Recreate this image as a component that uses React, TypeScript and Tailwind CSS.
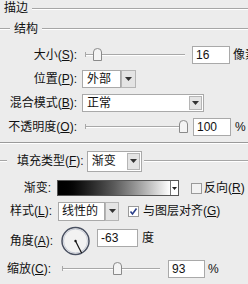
import React from 'react'

const FONT = { fontFamily: '"Liberation Sans", "Noto Sans CJK SC", sans-serif' }

function Label({ text, k, w }: { text: string; k?: string; w: number }) {
  return (
    <div className="shrink-0 text-right text-[12px] text-[#111] whitespace-nowrap" style={{ width: w }}>
      {text}
      {k && (
        <>
          (<u>{k}</u>)
        </>
      )}
      :
    </div>
  )
}

function Arrow({ w = 14, h = 18 }: { w?: number; h?: number }) {
  return (
    <div className="flex items-center justify-center bg-[#e4e4e4] border border-[#b5b5b5] shrink-0" style={{ width: w, height: h }}>
      <svg width="7" height="4" viewBox="0 0 7 4">
        <polygon points="0,0 7,0 3.5,4" fill="#333" />
      </svg>
    </div>
  )
}

function Slider({ w, pos }: { w: number; pos: number }) {
  return (
    <div className="relative h-[14px] shrink-0" style={{ width: w }}>
      <div className="absolute left-0 right-0 top-[6px] h-px bg-[#a8a8a8]" />
      <div className="absolute left-0 right-0 top-[7px] h-px bg-white" />
      <div className="absolute left-0 top-[4px] w-px h-[5px] bg-[#a8a8a8]" />
      <svg className="absolute top-0" style={{ left: pos - 4 }} width="9" height="13" viewBox="0 0 9 13">
        <path d="M0.5 12.5 V4 Q0.5 0.5 4.5 0.5 Q8.5 0.5 8.5 4 V12.5 Z" fill="#f4f4f4" stroke="#8a8a8a" />
      </svg>
    </div>
  )
}

function Input({ v, w }: { v: string; w: number }) {
  return (
    <div className="h-[18px] bg-white border border-[#a9a9a9] pl-[3px] flex items-center text-[12px] text-[#111] shrink-0" style={{ width: w }}>
      {v}
    </div>
  )
}

function Check({ on }: { on?: boolean }) {
  return (
    <svg width="11" height="11" viewBox="0 0 11 11" className="shrink-0">
      <rect x="0.5" y="0.5" width="10" height="10" fill={on ? '#fff' : '#f2f2f2'} stroke="#9a9a9a" />
      {on && <path d="M2.5 5.5 L4.5 8 L8.5 2.5" fill="none" stroke="#2a3f8a" strokeWidth="1.6" />}
    </svg>
  )
}

export default function App() {
  return (
    <div className="w-[248px] h-[284px] bg-[#ececec] overflow-hidden relative text-[12px] text-[#111]" style={FONT}>
      {/* 描边 */}
      <div className="h-[18px] flex items-center gap-[4px] pl-[4px]">
        <span className="-mt-[2px]">描边</span>
        <div className="flex-1 border-t border-[#a6a6a6] border-b-white border-b" />
      </div>

      {/* 结构 */}
      <div className="h-[22px] flex items-center">
        <div className="w-[10px] border-t border-b border-t-[#a6a6a6] border-b-white" />
        <span className="px-[4px]">结构</span>
        <div className="flex-1 border-t border-b border-t-[#a6a6a6] border-b-white" />
      </div>

      <div className="mt-[3px]">
        <div className="h-[24px] flex items-center">
          <Label text="大小" k="S" w={77} />
          <div className="ml-[8px]"><Slider w={100} pos={12} /></div>
          <div className="ml-[7px]"><Input v="16" w={38} /></div>
          <span className="ml-[3px] whitespace-nowrap">像素</span>
        </div>
        <div className="h-[24px] flex items-center">
          <Label text="位置" k="P" w={77} />
          <div className="ml-[5px] flex h-[18px]">
            <div className="w-[39px] h-[18px] bg-white border border-[#a9a9a9] pl-[4px] flex items-center">外部</div>
            <Arrow w={15} />
          </div>
        </div>
        <div className="h-[24px] flex items-center">
          <Label text="混合模式" k="B" w={77} />
          <div className="ml-[5px] flex h-[18px] w-[122px] bg-white border border-[#a9a9a9]">
            <div className="flex-1 pl-[4px] flex items-center">正常</div>
            <div className="flex items-center pr-[1px]"><Arrow w={13} h={14} /></div>
          </div>
        </div>
        <div className="h-[24px] flex items-center">
          <Label text="不透明度" k="O" w={77} />
          <div className="ml-[8px]"><Slider w={100} pos={98} /></div>
          <div className="ml-[8px]"><Input v="100" w={38} /></div>
          <span className="ml-[4px]">%</span>
        </div>
      </div>

      <div className="mt-[3px] border-t border-b border-t-[#9a9a9a] border-b-white" />

      {/* 填充类型 */}
      <div className="mt-[6px] h-[22px] flex items-center">
        <div className="w-[7px] border-t border-b border-t-[#a6a6a6] border-b-white" />
        <div className="ml-[10px] whitespace-nowrap">填充类型(<u>F</u>):</div>
        <div className="ml-[3px] w-[55px] h-[21px] bg-white border border-[#a9a9a9] flex items-center">
          <div className="flex-1 pl-[4px]">渐变</div>
          <div className="pr-[1px]"><Arrow w={13} h={17} /></div>
        </div>
        <div className="ml-[2px] flex-1 border-t border-b border-t-[#a6a6a6] border-b-white" />
      </div>

      <div className="mt-[5px] h-[22px] flex items-center">
        <Label text="渐变" w={51} />
        <div className="ml-[6px] flex h-[16px] border border-[#555]">
          <div className="w-[112px] h-full bg-gradient-to-r from-black via-[#5a5a5a] to-white" />
          <div className="w-[8px] h-full bg-white border-l border-[#777] flex items-center justify-center">
            <svg width="5" height="3" viewBox="0 0 5 3"><polygon points="0,0 5,0 2.5,3" fill="#222" /></svg>
          </div>
        </div>
        <div className="ml-[12px]"><Check /></div>
        <span className="ml-[2px] whitespace-nowrap">反向(<u>R</u>)</span>
      </div>

      <div className="mt-[1px] h-[22px] flex items-center">
        <Label text="样式" k="L" w={52} />
        <div className="ml-[6px] flex h-[19px]">
          <div className="w-[47px] h-[19px] bg-white border border-[#a9a9a9] pl-[3px] flex items-center whitespace-nowrap">线性的</div>
          <Arrow w={14} h={19} />
        </div>
        <div className="ml-[9px]"><Check on /></div>
        <span className="ml-[4px] whitespace-nowrap">与图层对齐(<u>G</u>)</span>
      </div>

      <div className="mt-[4px] h-[30px] flex items-center">
        <Label text="角度" k="A" w={53} />
        <svg className="ml-[6px] shrink-0" width="33" height="30" viewBox="0 0 33 30">
          <circle cx="16.5" cy="15" r="13.5" fill="#f2f2f2" stroke="#4a5162" strokeWidth="1.5" />
          <circle cx="16.5" cy="15" r="12" fill="none" stroke="#c8ccd6" strokeWidth="1" />
          <line x1="16.5" y1="15" x2="22.6" y2="27" stroke="#111" strokeWidth="1.2" />
          <circle cx="16.5" cy="15" r="1.2" fill="#111" />
        </svg>
        <div className="ml-[5px] -mt-[7px]"><Input v="-63" w={41} /></div>
        <span className="ml-[4px] -mt-[7px]">度</span>
      </div>

      <div className="mt-[2px] h-[22px] flex items-center">
        <Label text="缩放" k="C" w={51} />
        <div className="ml-[11px]"><Slider w={98} pos={55} /></div>
        <div className="ml-[8px]"><Input v="93" w={37} /></div>
        <span className="ml-[3px]">%</span>
      </div>
    </div>
  )
}
